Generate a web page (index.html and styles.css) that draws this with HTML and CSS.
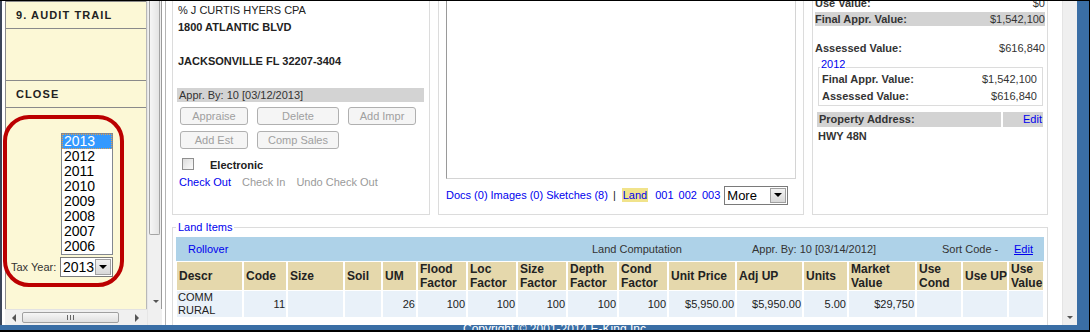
FILE: index.html
```html
<!DOCTYPE html>
<html lang="en">
<head>
    <meta charset="UTF-8">
    <meta name="viewport" content="width=device-width, initial-scale=1.0">
    <title>Parcel Detail</title>
    <link rel="stylesheet" href="styles.css">
</head>
<body>
    <div id="window">
        <div id="frame">
            <div class="edge"></div>

            <!-- Left navigation pane -->
            <div id="left-pane">
                <div class="side">
                    <div class="menu-item first">9. AUDIT TRAIL</div>
                    <div class="menu-item blank"></div>
                    <div class="menu-item">CLOSE</div>
                    <div class="tax-year">
                        <div class="year-list">
                            <div class="year selected">2013</div>
                            <div class="year">2012</div>
                            <div class="year">2011</div>
                            <div class="year">2010</div>
                            <div class="year">2009</div>
                            <div class="year">2008</div>
                            <div class="year">2007</div>
                            <div class="year">2006</div>
                        </div>
                        <div class="tax-row">
                            <span class="tax-label">Tax Year:</span>
                            <div class="select year-select"><span>2013</span><span class="drop"><i class="arrow"></i></span></div>
                        </div>
                    </div>
                </div>
                <div class="vscroll">
                    <div class="thumb"></div>
                    <div class="scroll-btn"><i class="tri-down"></i></div>
                </div>
                <div class="hscroll">
                    <div class="scroll-btn"><i class="tri-left"></i></div>
                    <div class="hthumb"><span class="grip"></span><span class="grip"></span><span class="grip"></span></div>
                    <div class="scroll-btn"><i class="tri-right"></i></div>
                </div>
                <div class="corner"></div>
            </div>

            <div class="divider"></div>

            <!-- Main parcel content -->
            <div id="main">
                <div class="panels">
                    <div class="box owner-box">
                        <div class="line">% J CURTIS HYERS CPA</div>
                        <div class="line bold">1800 ATLANTIC BLVD</div>
                        <div class="line"></div>
                        <div class="line bold">JACKSONVILLE FL 32207-3404</div>
                        <div class="appr-bar">Appr. By: 10 [03/12/2013]</div>
                        <div class="btn-row">
                            <button class="btn w68" disabled>Appraise</button>
                            <button class="btn w82" disabled>Delete</button>
                            <button class="btn w68" disabled>Add Impr</button>
                        </div>
                        <div class="btn-row second">
                            <button class="btn w68" disabled>Add Est</button>
                            <button class="btn w82" disabled>Comp Sales</button>
                        </div>
                        <div class="check-row">
                            <span class="checkbox"></span>
                            <span class="bold">Electronic</span>
                        </div>
                        <div class="checkout-row">
                            <a class="link">Check Out</a>
                            <span class="muted">Check In</span>
                            <span class="muted">Undo Check Out</span>
                        </div>
                    </div>

                    <div class="box photo-box">
                        <div class="photo-frame"></div>
                        <div class="media-links">
                            <a class="link">Docs (0)</a>
                            <a class="link">Images (0)</a>
                            <a class="link">Sketches (8)</a>
                            <span class="sep">|</span>
                            <a class="link current">Land</a>
                            <a class="link card first-card">001</a>
                            <a class="link card">002</a>
                            <a class="link card">003</a>
                            <div class="select more-select"><span>More</span><span class="drop"><i class="arrow"></i></span></div>
                        </div>
                    </div>

                    <div class="box value-box">
                        <div class="vrow first"><span class="bold">Use Value:</span><span>$0</span></div>
                        <div class="vrow shaded"><span class="bold">Final Appr. Value:</span><span>$1,542,100</span></div>
                        <div class="vrow assessed"><span class="bold">Assessed Value:</span><span>$616,840</span></div>
                        <div class="year-box">
                            <div class="year-title">2012</div>
                            <div class="yrow"><span class="bold">Final Appr. Value:</span><span>$1,542,100</span></div>
                            <div class="yrow"><span class="bold">Assessed Value:</span><span>$616,840</span></div>
                        </div>
                        <div class="address-bar">
                            <span class="address-label">Property Address:</span>
                            <a class="link address-edit">Edit</a>
                        </div>
                        <div class="address bold">HWY 48N</div>
                    </div>
                </div>

                <fieldset class="land-items">
                    <legend>Land Items</legend>
                    <div class="land-bar">
                        <a class="link">Rollover</a>
                        <span>Land Computation</span>
                        <span>Appr. By: 10 [03/14/2012]</span>
                        <span>Sort Code -</span>
                        <a class="link underline">Edit</a>
                    </div>
                    <table class="land-table">
                        <thead>
                            <tr>
                                <th class="c-descr">Descr</th>
                                <th class="c-code">Code</th>
                                <th class="c-size">Size</th>
                                <th class="c-soil">Soil</th>
                                <th class="c-um">UM</th>
                                <th class="c-fact">Flood<br>Factor</th>
                                <th class="c-fact">Loc<br>Factor</th>
                                <th class="c-fact">Size<br>Factor</th>
                                <th class="c-depth">Depth<br>Factor</th>
                                <th class="c-fact">Cond<br>Factor</th>
                                <th class="c-price">Unit Price</th>
                                <th class="c-adj">Adj UP</th>
                                <th class="c-units">Units</th>
                                <th class="c-market">Market<br>Value</th>
                                <th class="c-use">Use<br>Cond</th>
                                <th class="c-use">Use UP</th>
                                <th class="c-useval">Use<br>Value</th>
                            </tr>
                        </thead>
                        <tbody>
                            <tr>
                                <td class="left">COMM<br>RURAL</td>
                                <td>11</td>
                                <td></td>
                                <td></td>
                                <td>26</td>
                                <td>100</td>
                                <td>100</td>
                                <td>100</td>
                                <td>100</td>
                                <td>100</td>
                                <td>$5,950.00</td>
                                <td>$5,950.00</td>
                                <td>5.00</td>
                                <td>$29,750</td>
                                <td></td>
                                <td></td>
                                <td></td>
                            </tr>
                        </tbody>
                    </table>
                </fieldset>
            </div>

            <div class="vscroll main-scroll">
                <div class="scroll-btn"><i class="tri-down"></i></div>
            </div>
            <div class="blue-edge"></div>
        </div>
        <div id="status"><span>Copyright © 2001-2014 E-King Inc.</span></div>

        <!-- red highlight drawn over the tax year picker -->
        <div class="annotation"></div>
    </div>
</body>
</html>
```

FILE: styles.css
```css
* {
    box-sizing: border-box;
}
html, body {
    margin: 0;
    padding: 0;
}
body {
    width: 1090px;
    height: 332px;
    overflow: hidden;
    font-family: "Liberation Sans", Arial, sans-serif;
    font-size: 11px;
    color: #222;
    background: #fff;
}
.bold {
    font-weight: bold;
}
.link {
    color: #0000ee;
    cursor: pointer;
}
.underline {
    text-decoration: underline;
}
.muted {
    color: #9a9a9a;
}

/* Window frame */
#window {
    position: relative;
    height: 332px;
    border-top: 1px solid #000;
    border-right: 1px solid #000;
    border-bottom: 2px solid #000;
    display: flex;
    flex-direction: column;
}
#frame {
    display: flex;
    height: 324px;
}
.edge {
    width: 5px;
    background: #fff;
    border-left: 2px solid #3c4658;
}
.divider {
    width: 3px;
    background: #fff;
}
.blue-edge {
    width: 12px;
    background: #3a6ea5;
}
#status {
    height: 5px;
    background: #3a6ea5;
    overflow: hidden;
    color: #fff;
    font-size: 12px;
    padding-left: 463px;
}
#status span {
    display: block;
    line-height: 14px;
    margin-top: -3px;
}
.annotation {
    position: absolute;
    left: 3px;
    top: 114px;
    width: 121px;
    height: 172px;
    border: 4px solid #bb0000;
    border-radius: 26px;
}

/* Left pane */
#left-pane {
    width: 157px;
    display: grid;
    grid-template-columns: 142px 15px;
    grid-template-rows: 1fr 16px;
}
.side {
    background: #fcf8d6;
    border-left: 1px solid #8a8a8a;
    border-right: 1px solid #b8b8b8;
    overflow: hidden;
}
.menu-item {
    height: 27px;
    border-bottom: 1px solid #8a8a8a;
    padding-left: 10px;
    line-height: 26px;
    font-weight: bold;
    letter-spacing: 1.1px;
    color: #222;
}
.menu-item.first {
    height: 28px;
    border-top: 1px solid #8a8a8a;
}
.menu-item.blank {
    height: 52px;
}
.tax-year {
    padding-top: 25px;
}
.year-list {
    width: 52px;
    margin-left: 55px;
    border: 1px solid #828790;
    background: #fff;
}
.year {
    height: 15px;
    line-height: 15px;
    padding-left: 2px;
    font-size: 14px;
    color: #000;
}
.year.selected {
    background: #3399ff;
    color: #fff;
    outline: 1px dotted #e0a050;
    outline-offset: -1px;
}
.tax-row {
    display: flex;
    align-items: center;
    margin-top: 2px;
}
.tax-label {
    width: 54px;
    padding-left: 5px;
    color: #333;
}
.select {
    display: flex;
    align-items: center;
    justify-content: space-between;
    border: 1px solid #7a7a7a;
    background: #fff;
    color: #000;
    padding-left: 2px;
    flex-shrink: 0;
}
.select .drop {
    width: 16px;
    align-self: stretch;
    margin: 1px;
    background: linear-gradient(#f2f2f2, #d8d8d8);
    border: 1px solid #a0a0a0;
    display: flex;
    align-items: center;
    justify-content: center;
}
.arrow {
    width: 0;
    height: 0;
    border-left: 4px solid transparent;
    border-right: 4px solid transparent;
    border-top: 4px solid #000;
}
.year-select {
    width: 53px;
    height: 20px;
    font-size: 14px;
}

/* Scrollbars */
.vscroll {
    background: #f0f0f0;
    border-left: 1px solid #e6e6e6;
    display: flex;
    flex-direction: column;
}
#left-pane .vscroll {
    border-right: 1px solid #9a9a9a;
}
.thumb {
    height: 234px;
    margin: 0 1px;
    background: linear-gradient(to right, #f6f6f6, #e4e4e4);
    border: 1px solid #a4a4a4;
    border-top: none;
    border-radius: 0 0 2px 2px;
}
.scroll-btn {
    width: 15px;
    height: 16px;
    display: flex;
    align-items: center;
    justify-content: center;
    flex-shrink: 0;
}
.vscroll .scroll-btn {
    margin-top: auto;
}
.tri-down {
    width: 0;
    height: 0;
    border-left: 3px solid transparent;
    border-right: 3px solid transparent;
    border-top: 3px solid #555;
}
.tri-left {
    width: 0;
    height: 0;
    border-top: 4px solid transparent;
    border-bottom: 4px solid transparent;
    border-right: 4px solid #555;
}
.tri-right {
    width: 0;
    height: 0;
    border-top: 4px solid transparent;
    border-bottom: 4px solid transparent;
    border-left: 4px solid #555;
}
.hscroll {
    background: #f0f0f0;
    border-top: 1px solid #e2e2e2;
    display: flex;
    align-items: center;
    padding-left: 1px;
}
.hthumb {
    width: 97px;
    height: 11px;
    margin: 0 10px 0 1px;
    background: linear-gradient(#f6f6f6, #e0e0e0);
    border: 1px solid #a0a0a0;
    border-radius: 2px;
    display: flex;
    justify-content: center;
    align-items: center;
    gap: 2px;
}
.grip {
    width: 1px;
    height: 5px;
    background: #666;
}
.corner {
    background: #f0f0f0;
    border-left: 1px solid #e6e6e6;
}
.main-scroll {
    width: 15px;
    background: #efefef;
    border-left: 1px solid #e4e4e4;
}
.main-scroll .scroll-btn {
    height: 15px;
    width: 14px;
}

/* Main area */
#main {
    width: 897px;
    border-left: 1px solid #b4b4b4;
    padding-left: 6px;
    overflow: hidden;
}
.panels {
    display: flex;
    gap: 8px;
    height: 214px;
}
.box {
    border: 1px solid #dcdcdc;
    border-top: none;
    height: 214px;
}
.owner-box {
    width: 258px;
    padding: 1px 5px 0 5px;
}
.line {
    height: 17px;
    line-height: 17px;
    color: #222;
}
.appr-bar {
    margin: 18px 0 0 -1px;
    height: 14px;
    line-height: 14px;
    padding-left: 2px;
    background: #d3d3d3;
    color: #333;
}
.btn-row {
    display: flex;
    gap: 9px;
    margin: 5px 0 0 2px;
}
.btn-row.second {
    margin-top: 6px;
}
.btn {
    height: 18px;
    padding: 0;
    font-family: inherit;
    font-size: 11px;
    color: #a0a0a0;
    background: #f5f5f5;
    border: 1px solid #b0b0b0;
    border-radius: 3px;
}
.w68 {
    width: 68px;
}
.w82 {
    width: 82px;
}
.check-row {
    display: flex;
    align-items: center;
    margin: 9px 0 0 4px;
    height: 14px;
}
.checkbox {
    width: 12px;
    height: 12px;
    margin-top: -3px;
    border: 1px solid #8f8f8f;
    background: linear-gradient(135deg, #dcdcdc, #fbfbfb);
    margin-right: 16px;
}
.checkout-row {
    display: flex;
    gap: 11px;
    margin: 3px 0 0 1px;
    line-height: 14px;
}

.photo-box {
    width: 366px;
    padding: 0 7px;
}
.photo-frame {
    height: 178px;
    border: 1px solid #d4d4d4;
    border-left-color: #9a9a9a;
    border-top: none;
}
.media-links {
    display: flex;
    align-items: center;
    height: 18px;
    margin-top: 7px;
    gap: 3px;
    white-space: nowrap;
}
.media-links > * {
    flex-shrink: 0;
}
.media-links .sep {
    margin: 0 3px 0 2px;
    color: #222;
}
.media-links .current {
    background: #f1e38b;
    padding: 1px 1px;
}
.media-links .card {
    margin-left: 2px;
}
.media-links .first-card {
    margin-left: 4px;
}
.more-select {
    width: 64px;
    height: 19px;
    font-size: 13px;
    margin-left: 1px;
}

.value-box {
    width: 236px;
    padding: 0 2px;
    color: #333;
}
.vrow {
    display: flex;
    justify-content: space-between;
    height: 14px;
    line-height: 14px;
}
.vrow.first {
    margin-top: -5px;
}
.vrow.shaded {
    margin-top: 2px;
    background: #d3d3d3;
}
.vrow.assessed {
    margin-top: 15px;
}
.year-box {
    margin: 12px 2px 0 3px;
    border: 1px solid #dcdcdc;
    padding: 2px 5px 0 3px;
}
.year-title {
    width: fit-content;
    margin: -13px 0 0 -2px;
    padding: 0 1px;
    line-height: 14px;
    background: #fff;
    color: #0000ee;
}
.yrow {
    display: flex;
    justify-content: space-between;
    height: 17px;
    line-height: 17px;
}
.address-bar {
    display: flex;
    gap: 2px;
    margin: 6px 2px 0 2px;
    height: 15px;
    line-height: 15px;
}
.address-label {
    width: 184px;
    background: #d3d3d3;
    padding-left: 2px;
    font-weight: bold;
}
.address-edit {
    flex: 1;
    background: #d3d3d3;
    text-align: right;
    padding-right: 1px;
}
.address {
    margin-top: 1px;
    line-height: 16px;
    padding-left: 3px;
}

/* Land items */
.land-items {
    width: 876px;
    margin: 5px 0 0 0;
    padding: 3px 3px 10px 3px;
    border: 1px solid #dcdcdc;
    min-width: 0;
}
.land-items legend {
    padding: 0 2px;
    line-height: 14px;
    color: #0000ee;
}
.land-bar {
    display: grid;
    grid-template-columns: 404px 160px 190px 72px 1fr;
    height: 24px;
    line-height: 24px;
    padding-left: 12px;
    background: #aed2e8;
    color: #333;
}
.land-table {
    table-layout: fixed;
    width: 870px;
    margin: 0 -1px;
    border-collapse: separate;
    border-spacing: 2px 1px;
}
.land-table th {
    height: 28px;
    padding: 0 0 0 2px;
    background: #e5d8ac;
    font-size: 12px;
    line-height: 14px;
    text-align: left;
    vertical-align: middle;
    white-space: nowrap;
    color: #222;
}
.land-table td {
    height: 26px;
    padding: 0 1px 0 0;
    background: #e9f1f9;
    line-height: 13px;
    text-align: right;
    color: #222;
}
.land-table td.left {
    text-align: left;
    padding-left: 1px;
}
.c-descr { width: 65px; }
.c-code { width: 42px; }
.c-size { width: 55px; }
.c-soil { width: 36px; }
.c-um { width: 33px; }
.c-fact { width: 48px; }
.c-depth { width: 49px; }
.c-price { width: 66px; }
.c-adj { width: 65px; }
.c-units { width: 43px; }
.c-market { width: 66px; }
.c-use { width: 44px; }
.c-useval { width: 34px; }
```
